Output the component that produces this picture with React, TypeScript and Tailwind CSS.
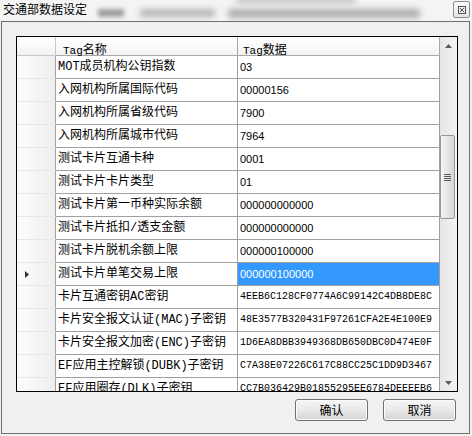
import React from 'react'

type Row = {
  name: string
  value: string
  mono?: boolean
  selected?: boolean
}

const rows: Row[] = [
  { name: 'MOT成员机构公钥指数', value: '03' },
  { name: '入网机构所属国际代码', value: '00000156' },
  { name: '入网机构所属省级代码', value: '7900' },
  { name: '入网机构所属城市代码', value: '7964' },
  { name: '测试卡片互通卡种', value: '0001' },
  { name: '测试卡片卡片类型', value: '01' },
  { name: '测试卡片第一币种实际余额', value: '000000000000' },
  { name: '测试卡片抵扣/透支金额', value: '000000000000' },
  { name: '测试卡片脱机余额上限', value: '000000100000' },
  { name: '测试卡片单笔交易上限', value: '000000100000', selected: true },
  { name: '卡片互通密钥AC密钥', value: '4EEB6C128CF0774A6C99142C4DB8DE8C', mono: true },
  { name: '卡片安全报文认证(MAC)子密钥', value: '48E3577B320431F97261CFA2E4E100E9', mono: true },
  { name: '卡片安全报文加密(ENC)子密钥', value: '1D6EA8DBB3949368DB650DBC0D474E0F', mono: true },
  { name: 'EF应用主控解锁(DUBK)子密钥', value: 'C7A38E07226C617C88CC25C1DD9D3467', mono: true },
  { name: 'EF应用圈存(DLK)子密钥', value: 'CC7B036429B01855295EE6784DEEEEB6', mono: true },
]

function Arrow({ down }: { down?: boolean }) {
  return (
    <svg width="7" height="4" viewBox="0 0 7 4">
      <path d={down ? 'M0 0 L3.5 4 L7 0Z' : 'M0 4 L3.5 0 L7 4Z'} fill="#5a5a5a" />
    </svg>
  )
}

export default function App() {
  return (
    <div className="w-[472px] h-[436px] bg-[#f0f0f0] overflow-hidden text-black font-['Noto_Sans_CJK_SC',sans-serif]">
      {/* 标题栏（背后是模糊的窗口内容） */}
      <div className="relative h-[21px] bg-[#f4f4f4] overflow-hidden">
        <div className="absolute left-[98px] top-[9px] w-[26px] h-[8px] bg-[#8a8a8a] blur-[2px] opacity-80" />
        <div className="absolute left-[140px] top-[9px] w-[75px] h-[8px] bg-[#a5a5a5] blur-[3px] opacity-80" />
        <div className="absolute left-[228px] top-[9px] w-[192px] h-[9px] bg-[#9c9c9c] blur-[3px] opacity-80" />
        <div className="absolute left-[236px] top-[-3px] w-[120px] h-[6px] bg-[#a8a8a8] blur-[3px] opacity-70" />
        <div className="relative flex items-start justify-between h-full pl-[3px] pr-[2px]">
          <span className="text-[12px] leading-[14px] mt-[2px]">交通部数据设定</span>
          <div className="mt-[1px] w-[17px] h-[17px] border border-[#8e8e8e] rounded-[2px] bg-linear-to-b from-[#fafafa] to-[#e4e4e4] flex items-center justify-center">
            <svg width="8" height="8" viewBox="0 0 8 8">
              <rect x="0.5" y="0.5" width="7" height="7" fill="none" stroke="#555" />
              <path d="M2 2 L6 6 M6 2 L2 6" stroke="#555" strokeWidth="1" />
            </svg>
          </div>
        </div>
      </div>

      {/* 对话框主体 */}
      <div className="ml-[1px] w-[469px] h-[413px] border border-[#707070] pl-[14px] pt-[14px]">
        <div className="w-[442px] h-[356px] border border-black bg-white flex overflow-hidden">
          <div className="w-[423px] flex flex-col overflow-hidden">
            {/* 表头 */}
            <div className="flex h-[19px] shrink-0 bg-linear-to-b from-white to-[#f1f2f4]">
              <div className="w-[39px] border-r border-b border-[#c8c8c8]" />
              <div className="w-[182px] border-r border-b border-[#a8a8a8] pl-[7px] pt-[3px] leading-[14px]">
                <span className="font-['Liberation_Mono',monospace] text-[11px]">Tag</span>
                <span className="text-[12px]">名称</span>
              </div>
              <div className="w-[202px] border-r border-b border-[#a8a8a8] pl-[5px] pt-[3px] leading-[14px]">
                <span className="font-['Liberation_Mono',monospace] text-[11px]">Tag</span>
                <span className="text-[12px]">数据</span>
              </div>
            </div>

            {/* 数据行 */}
            {rows.map((r) => (
              <div key={r.name} className="flex h-[23px] shrink-0">
                <div className="w-[39px] border-r border-r-[#a0a0a0] border-b border-b-[#e6e6e6] bg-linear-to-r from-[#fdfdfd] to-[#eeeeee] flex items-center pl-[8px]">
                  {r.selected && (
                    <svg width="4" height="7" viewBox="0 0 4 7">
                      <path d="M0 0 L4 3.5 L0 7Z" fill="#333" />
                    </svg>
                  )}
                </div>
                <div className="w-[182px] border-r border-b border-[#a0a0a0] pl-[2px] text-[12px] leading-[22px] whitespace-nowrap overflow-hidden font-['Liberation_Mono','Noto_Sans_CJK_SC',monospace]">
                  {r.name}
                </div>
                <div
                  className={
                    r.selected
                      ? "w-[202px] border-r border-b border-[#a0a0a0] pl-[2px] leading-[22px] whitespace-nowrap overflow-hidden bg-[#3399ff] text-white text-[11px] font-['Liberation_Sans',sans-serif]"
                      : r.mono
                        ? "w-[202px] border-r border-b border-[#a0a0a0] pl-[2px] leading-[22px] whitespace-nowrap overflow-hidden text-[10px] font-['Liberation_Mono',monospace]"
                        : "w-[202px] border-r border-b border-[#a0a0a0] pl-[2px] leading-[22px] whitespace-nowrap overflow-hidden text-[11px] font-['Liberation_Sans',sans-serif]"
                  }
                >
                  {r.value}
                </div>
              </div>
            ))}
          </div>

          {/* 滚动条 */}
          <div className="w-[17px] flex flex-col bg-linear-to-r from-[#e6e6e6] to-[#f3f3f3]">
            <div className="h-[17px] shrink-0 flex items-center justify-center">
              <Arrow />
            </div>
            <div className="flex-1">
              <div className="mt-[81px] w-[15px] h-[84px] border border-[#979797] rounded-[2px] bg-linear-to-r from-[#f4f4f4] to-[#d6d6d6] flex flex-col items-center justify-center gap-[1px]">
                <div className="w-[7px] h-[1px] bg-[#5c5c5c]" />
                <div className="w-[7px] h-[1px] bg-[#5c5c5c]" />
                <div className="w-[7px] h-[1px] bg-[#5c5c5c]" />
                <div className="w-[7px] h-[1px] bg-[#5c5c5c]" />
              </div>
            </div>
            <div className="h-[17px] shrink-0 flex items-center justify-center">
              <Arrow down />
            </div>
          </div>
        </div>

        {/* 按钮 */}
        <div className="w-[442px] flex justify-end gap-[15px] pr-[2px] mt-[7px]">
          <button className="w-[73px] h-[22px] border border-[#707070] rounded-[3px] bg-linear-to-b from-[#f6f6f6] via-[#e9e9e9] to-[#d5d5d5] shadow-[inset_0_0_0_1px_#fbfbfb] text-[12px] leading-[14px]">
            确认
          </button>
          <button className="w-[73px] h-[22px] border border-[#707070] rounded-[3px] bg-linear-to-b from-[#f6f6f6] via-[#e9e9e9] to-[#d5d5d5] shadow-[inset_0_0_0_1px_#fbfbfb] text-[12px] leading-[14px]">
            取消
          </button>
        </div>
      </div>
    </div>
  )
}
